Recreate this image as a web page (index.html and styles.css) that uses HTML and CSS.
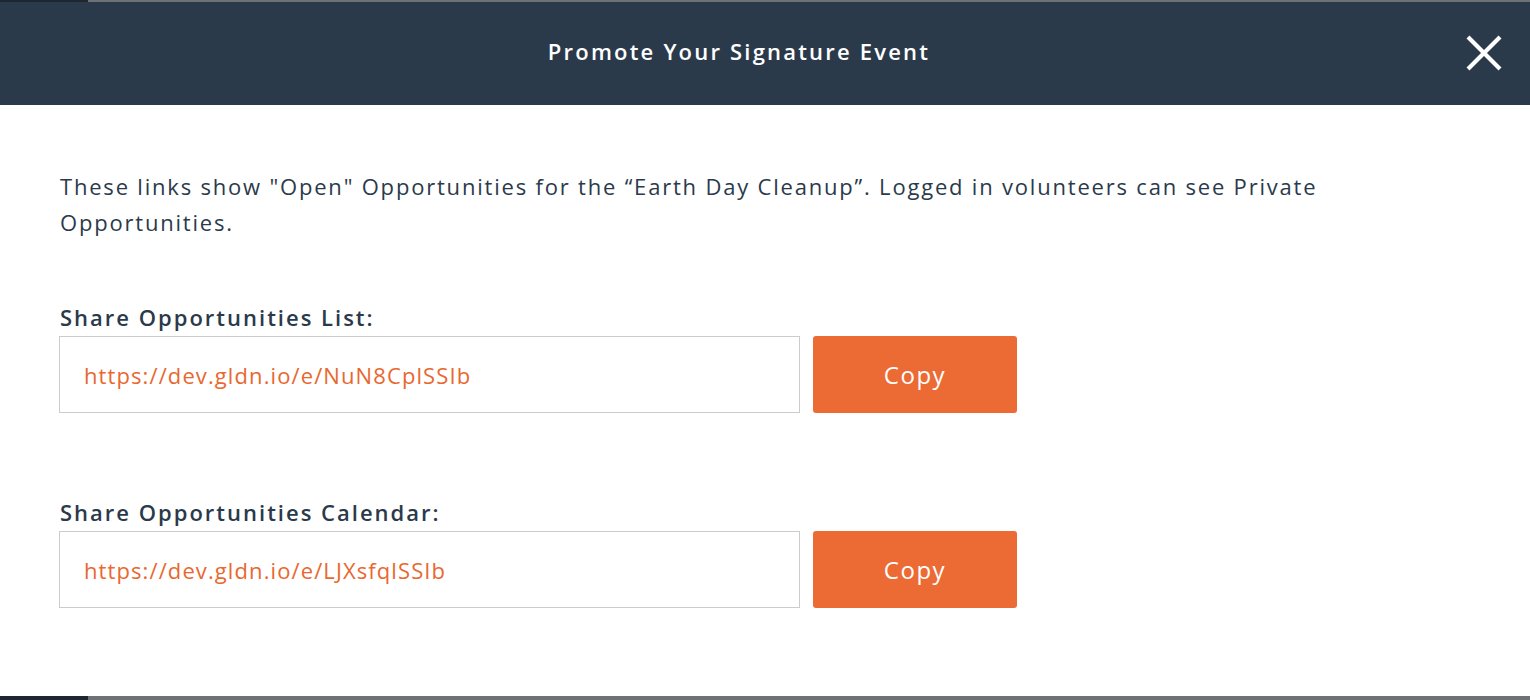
FILE: index.html
```html
<!DOCTYPE html>
<html lang="en">
<head>
  <meta charset="UTF-8">
  <meta name="viewport" content="width=device-width, initial-scale=1.0">
  <title>Promote Your Signature Event</title>
  <link rel="stylesheet" href="styles.css">
</head>
<body>

  <div class="edge"><span class="edge-dark"></span></div>

  <div class="modal-header">
    <h1>Promote Your Signature Event</h1>
    <button class="close" aria-label="Close">
      <svg width="36" height="36" viewBox="0 0 36 36">
        <path d="M2 2 L34 34 M34 2 L2 34" stroke="#fff" stroke-width="4.2" fill="none"/>
      </svg>
    </button>
  </div>

  <div class="modal-body">
    <p class="intro">These links show "Open" Opportunities for the “Earth Day Cleanup”. Logged in volunteers can see Private Opportunities.</p>

    <div class="share">
      <label for="list-link">Share Opportunities List:</label>
      <div class="share-row">
        <input type="text" id="list-link" value="https://dev.gldn.io/e/NuN8CplSSIb" readonly>
        <button class="copy">Copy</button>
      </div>
    </div>

    <div class="share">
      <label for="cal-link">Share Opportunities Calendar:</label>
      <div class="share-row">
        <input type="text" id="cal-link" value="https://dev.gldn.io/e/LJXsfqlSSIb" readonly>
        <button class="copy">Copy</button>
      </div>
    </div>
  </div>

  <div class="edge edge-bottom"><span class="edge-dark"></span></div>

</body>
</html>
```

FILE: styles.css
```css
body {
  font-family: 'Open Sans', Arial, sans-serif;
  background-color: #ffffff;
  margin: 0;
  height: 700px;
  display: flex;
  flex-direction: column;
  overflow: hidden;
}

.edge {
  height: 2px;
  background-color: #6e7277;
  display: flex;
}

.edge-dark {
  width: 88px;
  background-color: #1d2631;
}

.edge-bottom {
  height: 4px;
  margin-top: auto;
}

.modal-header {
  background-color: #2b3a4b;
  height: 103px;
  box-sizing: border-box;
  padding: 0 52px 6px 0;
  display: flex;
  align-items: center;
  justify-content: center;
  position: relative;
}

.modal-header h1 {
  margin: 0;
  color: #fff;
  font-size: 22px;
  font-weight: 600;
  letter-spacing: 2.2px;
}

.close {
  position: absolute;
  right: 28px;
  top: 33px;
  background: none;
  border: none;
  padding: 0;
  width: 36px;
  height: 36px;
  cursor: pointer;
}

.close svg {
  display: block;
}

.modal-body {
  padding: 63px 60px 0 60px;
}

.intro {
  margin: 0 0 62px 0;
  font-size: 22px;
  line-height: 36px;
  color: #2b3a4b;
  letter-spacing: 1.8px;
}

.share {
  margin-bottom: 84px;
}

.share label {
  display: block;
  font-size: 22px;
  font-weight: 600;
  line-height: 30px;
  color: #2b3a4b;
  letter-spacing: 2px;
  margin-bottom: 4px;
}

.share-row {
  display: flex;
  gap: 13px;
}

.share-row input {
  width: 741px;
  height: 77px;
  box-sizing: border-box;
  border: 1px solid #cccccc;
  padding: 0 24px;
  font-family: inherit;
  font-size: 22px;
  letter-spacing: 1.1px;
  color: #e8682f;
  outline: none;
  margin: 0 0 0 -1px;
}

.copy {
  width: 204px;
  height: 77px;
  background-color: #ec6a34;
  color: #fff;
  border: none;
  border-radius: 3px;
  font-family: inherit;
  font-size: 24px;
  font-weight: 500;
  letter-spacing: 1.5px;
  cursor: pointer;
}
```
